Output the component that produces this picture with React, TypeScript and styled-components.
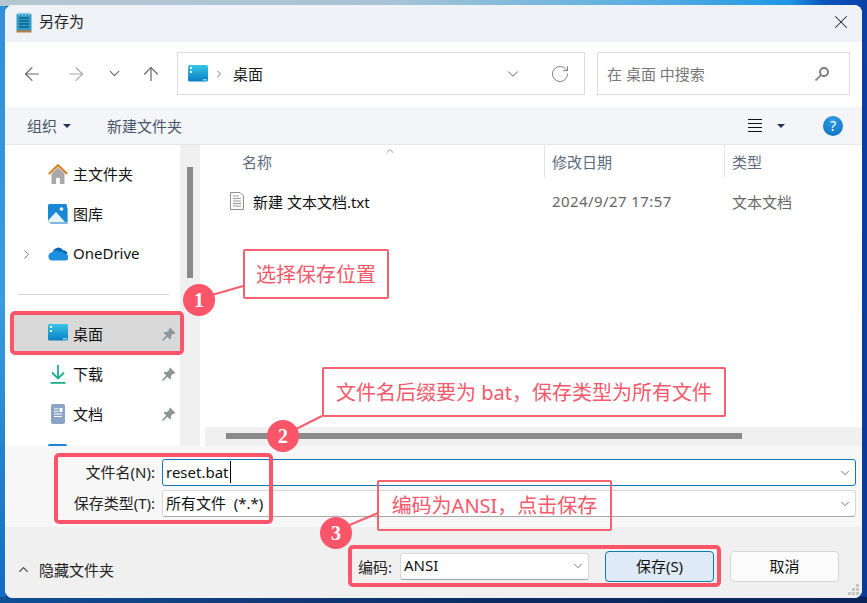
import React from 'react'
import styled, { createGlobalStyle } from 'styled-components'
import { ArrowLeft, ArrowRight, ArrowUp, ChevronDown, ChevronRight, ChevronUp, RotateCw, X } from 'lucide-react'

const FONT = '"Noto Sans", "Noto Sans CJK SC", sans-serif'

const GlobalStyle = createGlobalStyle`
  html, body { margin: 0; padding: 0; }
  body { font-family: ${FONT}; font-size: 15px; color: #1a1a1a; }
  * { box-sizing: border-box; }
`

const Desktop = styled.div`
  position: relative;
  width: 867px;
  height: 603px;
  padding: 5px;
  overflow: hidden;
  background:
    linear-gradient(90deg, #b4c6d0 0%, #a9c4d6 45%, #58aee0 75%, #1f97e6 91%, #0b55bd 95%, #0a3fa6 100%) top / 100% 6px no-repeat,
    linear-gradient(90deg, #0f4f96 0%, #123a78 30%, #0b2a62 60%, #0a2458 100%) bottom / 100% 6px no-repeat,
    linear-gradient(180deg, #2f8fd8 0%, #3a9be0 50%, #0f6cc0 100%) left / 6px 100% no-repeat,
    linear-gradient(180deg, #0a3fa6 0%, #0a3a98 100%);
`

const Window = styled.div`
  width: 857px;
  height: 593px;
  display: flex;
  flex-direction: column;
  border-radius: 8px;
  overflow: hidden;
  background: #fff;
`

const TitleBar = styled.div`
  height: 37px;
  flex: none;
  display: flex;
  align-items: center;
  gap: 7px;
  padding: 0 10px 3px 11px;
  background: #eff3f8;
`

const TitleText = styled.span`
  flex: 1;
  padding-bottom: 3px;
  color: #222;
`

const NavBar = styled.div`
  height: 65px;
  flex: none;
  display: flex;
  align-items: center;
  padding: 0 12px 2px 0;
  background: #fff;
`

const NavButton = styled.span<{ $w: number; $disabled?: boolean }>`
  width: ${(p) => p.$w}px;
  flex: none;
  display: flex;
  justify-content: center;
  color: ${(p) => (p.$disabled ? '#a8a8a8' : '#666')};
`

const AddressBox = styled.div`
  width: 408px;
  height: 43px;
  margin-left: 10px;
  flex: none;
  display: flex;
  align-items: center;
  padding: 0 10px;
  border: 1px solid #dcdcdc;
  background: #fff;
`

const Crumb = styled.span`
  margin-left: 8px;
  flex: 1;
  color: #1a1a1a;
`

const SearchBox = styled.div`
  width: 253px;
  height: 43px;
  margin-left: 12px;
  display: flex;
  align-items: center;
  justify-content: space-between;
  padding: 0 19px 0 9px;
  border: 1px solid #dcdcdc;
  color: #777;
`

const ToolBar = styled.div`
  height: 38px;
  flex: none;
  display: flex;
  align-items: center;
  padding: 0 19px 0 22px;
  background: #f3f5f8;
  border-bottom: 1px solid #e6e6e6;
  color: #47566a;
`

const ToolLabel = styled.span`
  display: flex;
  align-items: center;
  gap: 6px;
  margin-right: 36px;
`

const Caret = styled.i`
  display: block;
  width: 0;
  height: 0;
  border-left: 4px solid transparent;
  border-right: 4px solid transparent;
  border-top: 4px solid #1d3557;
`

const Spacer = styled.span`
  flex: 1;
`

const ViewIcon = styled.span`
  display: flex;
  flex-direction: column;
  gap: 3px;
  width: 14px;
  margin-right: 15px;

  b {
    display: block;
    height: 1px;
    background: #111;
  }
`

const HelpBadge = styled.span`
  width: 20px;
  height: 20px;
  margin-left: 38px;
  border-radius: 50%;
  background: radial-gradient(circle at 50% 20%, #2f9be6, #0b6fbe);
  color: #fff;
  font-size: 14px;
  line-height: 20px;
  text-align: center;
`

const Body = styled.div`
  height: 301px;
  flex: none;
  display: flex;
  background: #fff;
`

const Sidebar = styled.nav`
  width: 175px;
  flex: none;
  padding-top: 9px;
  overflow: hidden;
`

const NavRow = styled.div<{ $selected?: boolean }>`
  height: 40px;
  margin-left: 9px;
  display: flex;
  align-items: center;
  padding: 0 4px 0 8px;
  background: ${(p) => (p.$selected ? '#d9d9d9' : 'transparent')};
  color: #111;
`

const Expander = styled.span`
  width: 26px;
  flex: none;
  color: #777;
  display: flex;
`

const NavIcon = styled.span`
  width: 20px;
  height: 20px;
  flex: none;
  margin-right: 5px;
`

const NavLabel = styled.span`
  flex: 1;
  padding-bottom: 2px;
`

const NavDivider = styled.div`
  height: 40px;
  margin: 0 11px 0 13px;
  display: flex;
  align-items: center;

  &::after {
    content: '';
    flex: 1;
    height: 1px;
    background: #d4d4d4;
  }
`

const VScroll = styled.div`
  width: 20px;
  flex: none;
  padding-top: 22px;
  background: #f0f0f0;

  i {
    display: block;
    width: 6px;
    height: 111px;
    margin-left: 7px;
    background: #8a8a8a;
  }
`

const FilePane = styled.section`
  flex: 1;
  margin-left: 5px;
  display: flex;
  flex-direction: column;
  min-width: 0;
`

const Rows = styled.div`
  flex: 1;
`

const ColumnHeader = styled.div`
  position: relative;
  height: 33px;
  display: grid;
  grid-template-columns: 339px 180px 1fr;
  color: #5c6b7e;
`

const SortMark = styled.span`
  position: absolute;
  left: 179px;
  top: 0;
  color: #666;
  display: flex;
`

const HeadCell = styled.div<{ $indent: number; $rule?: boolean }>`
  display: flex;
  align-items: center;
  padding-left: ${(p) => p.$indent}px;
  border-left: ${(p) => (p.$rule ? '1px solid #e4e4e4' : 'none')};
`

const FileRow = styled.div`
  height: 40px;
  margin-top: 3px;
  display: grid;
  grid-template-columns: 339px 180px 1fr;
  align-items: center;
`

const FileName = styled.div`
  display: flex;
  align-items: center;
  gap: 9px;
  padding-left: 25px;
  color: #111;
`

const FileMeta = styled.div`
  padding-left: 8px;
  color: #666;
`

const FileDate = styled(FileMeta)`
  letter-spacing: 0.42px;
`

const HScroll = styled.div`
  height: 19px;
  flex: none;
  padding: 6px 0 0 21px;
  background: #f0f0f0;

  i {
    display: block;
    width: 516px;
    height: 6px;
    background: #8a8a8a;
  }
`

const FormArea = styled.div`
  height: 81px;
  flex: none;
  display: flex;
  flex-direction: column;
  gap: 4px;
  padding: 13px 6px 0 0;
  background: #f7f7f7;
`

const FormRow = styled.div`
  display: flex;
  align-items: center;
  height: 27px;
`

const FormLabel = styled.label`
  width: 152px;
  flex: none;
  padding: 0 2px 2px 0;
  text-align: right;
  color: #222;
  white-space: nowrap;
`

const Field = styled.div<{ $focus?: boolean; $w?: number }>`
  width: ${(p) => (p.$w ? `${p.$w}px` : 'auto')};
  flex: ${(p) => (p.$w ? 'none' : '1')};
  height: 27px;
  margin-left: ${(p) => (p.$w ? '0' : '5px')};
  display: flex;
  align-items: center;
  justify-content: space-between;
  padding: 0 3px 0 3px;
  background: #fff;
  border: 1px solid ${(p) => (p.$focus ? '#0f78b8' : '#d8d8d8')};
  border-bottom-color: ${(p) => (p.$focus ? '#0f78b8' : '#a8a8a8')};
  border-radius: 3px;
  color: #111;
  white-space: pre;
`

const TextCaret = styled.i`
  display: inline-block;
  width: 1px;
  height: 22px;
  margin-left: 1px;
  background: #000;
  vertical-align: middle;
`

const FieldText = styled.span`
  display: flex;
  align-items: center;
  padding-bottom: 2px;
`

const ActionBar = styled.div`
  flex: 1;
  position: relative;
  display: flex;
  align-items: center;
  padding: 0 23px 0 11px;
  background: #f0f0f0;
`

const Toggle = styled.span`
  display: flex;
  align-items: center;
  gap: 8px;
  flex: 1;
  margin-top: 14px;
  color: #222;
`

const EncodingLabel = styled.span`
  margin-right: 8px;
  color: #222;
`

const EncodingGroup = styled.div`
  display: flex;
  align-items: center;
  margin-top: 7px;
`

const DialogButton = styled.button<{ $primary?: boolean }>`
  width: 109px;
  height: 31px;
  margin-left: 16px;
  padding: 0 0 2px;
  font: inherit;
  color: #111;
  border-radius: 4px;
  border: 1px solid ${(p) => (p.$primary ? '#0f78b8' : '#d6d6d6')};
  background: ${(p) => (p.$primary ? '#deebf6' : '#fbfbfb')};
`

const Grip = styled.svg`
  position: absolute;
  right: 2px;
  bottom: 2px;
`

const Highlight = styled.div<{ $x: number; $y: number; $w: number; $h: number }>`
  position: absolute;
  left: ${(p) => p.$x}px;
  top: ${(p) => p.$y}px;
  width: ${(p) => p.$w}px;
  height: ${(p) => p.$h}px;
  border: 4px solid #fb5569;
  border-radius: 5px;
`

const Callout = styled.div<{ $x: number; $y: number; $w: number; $h: number }>`
  position: absolute;
  left: ${(p) => p.$x}px;
  top: ${(p) => p.$y}px;
  width: ${(p) => p.$w}px;
  height: ${(p) => p.$h}px;
  display: flex;
  align-items: center;
  justify-content: center;
  padding-bottom: 2px;
  border: 2px solid #f7606f;
  border-radius: 2px;
  color: #f5596b;
  font-size: 20px;
  white-space: pre;
`

const Marker = styled.div<{ $x: number; $y: number }>`
  position: absolute;
  left: ${(p) => p.$x - 16}px;
  top: ${(p) => p.$y - 16}px;
  width: 32px;
  height: 32px;
  border-radius: 50%;
  background: #fb5569;
  color: #fff;
  font: bold 20px/32px "Liberation Serif", serif;
  text-align: center;
`

const Connectors = styled.svg`
  position: absolute;
  left: 0;
  top: 0;
`

const DesktopIcon = ({ w = 20, h = 17 }: { w?: number; h?: number }) => (
  <svg width={w} height={h} viewBox="0 0 20 17">
    <defs>
      <linearGradient id="desk" x1="0" y1="0" x2="0" y2="1">
        <stop offset="0" stopColor="#38c6e6" />
        <stop offset="1" stopColor="#0a7fc4" />
      </linearGradient>
    </defs>
    <rect x="0" y="0" width="20" height="16.5" rx="1.5" fill="url(#desk)" />
    <rect x="2" y="2" width="2" height="2" fill="#fff" />
    <rect x="2" y="6" width="2" height="2" fill="#fff" />
    <rect x="15" y="14.4" width="4" height="1" fill="#d8f0fa" />
  </svg>
)

const NotepadIcon = () => (
  <svg width="16" height="21" viewBox="0 0 16 21">
    <rect x="0.5" y="1.5" width="15" height="18" rx="1.5" fill="#2f9fc6" />
    <rect x="0.5" y="18.5" width="15" height="2" fill="#c9793a" />
    <path d="M3 6h10M3 9h10M3 12h10M3 15h10" stroke="#0f5f86" strokeWidth="1.3" />
    <path d="M3 0.5v3M6.3 0.5v3M9.7 0.5v3M13 0.5v3" stroke="#9fd4e6" strokeWidth="1.2" />
  </svg>
)

const HomeIcon = () => (
  <svg width="20" height="20" viewBox="0 0 20 20">
    <path d="M3.5 9.5L10 3.5l6.5 6V20h-4.6v-6H8.1v6H3.5z" fill="#a9a9a9" />
    <path d="M0.8 10L10 1.2 19.2 10" fill="none" stroke="#d98324" strokeWidth="2.2" />
  </svg>
)

const GalleryIcon = () => (
  <svg width="20" height="20" viewBox="0 0 20 20">
    <rect x="2" y="3" width="18" height="17" rx="1.5" fill="#7db6de" />
    <rect x="0" y="0" width="19" height="18" rx="1.5" fill="#1a86d6" />
    <circle cx="13.5" cy="5" r="1.8" fill="#fff" />
    <path d="M0 16.5L8 8l9 10H1.5A1.5 1.5 0 0 1 0 16.5z" fill="#e8f2fa" />
  </svg>
)

const CloudIcon = () => (
  <svg width="20" height="20" viewBox="0 0 20 20">
    <path d="M5 7.5a5.5 5.5 0 0 1 10-1.2A4 4 0 0 1 19.5 10L12 13 6 9z" fill="#0a64b4" />
    <path d="M4.2 16.5A4 4 0 0 1 3.6 8.6 5 5 0 0 1 11 7.8a4.4 4.4 0 0 1 6 2.4 3.2 3.2 0 0 1 1 6.3z" fill="#1c8fe0" />
  </svg>
)

const DownloadIcon = () => (
  <svg width="20" height="20" viewBox="0 0 20 20">
    <path d="M10 1v13M4 8.5l6 6 6-6" fill="none" stroke="#1fae8f" strokeWidth="1.8" />
    <rect x="2.5" y="18" width="15" height="1.8" fill="#1fae8f" />
  </svg>
)

const DocsIcon = () => (
  <svg width="20" height="20" viewBox="0 0 20 20">
    <rect x="3" y="0" width="14" height="20" rx="2" fill="#8ba3c4" />
    <path d="M6 5h4.5M6 7.5h4.5M6 10h8M6 12.5h8" stroke="#fff" strokeWidth="1.1" />
    <rect x="11.5" y="4" width="3" height="4" fill="#fff" />
  </svg>
)

const PinIcon = () => (
  <svg width="14" height="14" viewBox="0 0 14 14">
    <path d="M8 0.5l5.5 5.5-1.2 1-1-.4-2.4 2.4.2 2.4-1 1-2.6-2.6L1 14 0 13l4.2-4.5L1.6 5.9l1-1 2.4.2 2.4-2.4-.4-1z" fill="#8f9498" />
  </svg>
)

const SearchGlyph = () => (
  <svg width="16" height="16" viewBox="0 0 16 16">
    <circle cx="10" cy="6" r="4" fill="none" stroke="#777" strokeWidth="1.8" />
    <path d="M7 9l-5.5 5.5" stroke="#929292" strokeWidth="2.2" />
  </svg>
)

const TextFileIcon = () => (
  <svg width="14" height="18" viewBox="0 0 14 18">
    <path d="M.5.5h9.5l3.5 3.5v13.5H.5z" fill="#fff" stroke="#8f8f8f" />
    <path d="M3 4h6M3 6.5h8M3 9h8M3 11.5h8M3 14h8" stroke="#9a9a9a" />
  </svg>
)

const sideItems = [
  { label: '主文件夹', icon: <HomeIcon /> },
  { label: '图库', icon: <GalleryIcon /> },
  { label: 'OneDrive', icon: <CloudIcon />, expand: true },
  { divider: true },
  { label: '桌面', icon: <DesktopIcon />, pin: true, selected: true },
  { label: '下载', icon: <DownloadIcon />, pin: true },
  { label: '文档', icon: <DocsIcon />, pin: true },
  { label: '', icon: <GalleryIcon /> },
]

export default function App() {
  return (
    <Desktop>
      <GlobalStyle />
      <Window>
        <TitleBar>
          <NotepadIcon />
          <TitleText>另存为</TitleText>
          <X size={22} strokeWidth={1.1} color="#222" />
        </TitleBar>

        <NavBar>
          <NavButton $w={54}>
            <ArrowLeft size={22} strokeWidth={1.3} />
          </NavButton>
          <NavButton $w={34} $disabled>
            <ArrowRight size={22} strokeWidth={1.3} />
          </NavButton>
          <NavButton $w={42}>
            <ChevronDown size={17} strokeWidth={1.6} />
          </NavButton>
          <NavButton $w={32}>
            <ArrowUp size={22} strokeWidth={1.3} />
          </NavButton>
          <AddressBox>
            <DesktopIcon />
            <ChevronRight size={12} strokeWidth={1.8} color="#666" style={{ marginLeft: 5 }} />
            <Crumb>桌面</Crumb>
            <ChevronDown size={18} strokeWidth={1.2} color="#555" style={{ marginRight: 28 }} />
            <RotateCw size={20} strokeWidth={1.1} color="#777" style={{ marginRight: 4 }} />
          </AddressBox>
          <SearchBox>
            <span>在 桌面 中搜索</span>
            <SearchGlyph />
          </SearchBox>
        </NavBar>

        <ToolBar>
          <ToolLabel>
            组织
            <Caret />
          </ToolLabel>
          <span>新建文件夹</span>
          <Spacer />
          <ViewIcon>
            <b />
            <b />
            <b />
            <b />
          </ViewIcon>
          <Caret />
          <HelpBadge>?</HelpBadge>
        </ToolBar>

        <Body>
          <Sidebar>
            {sideItems.map((item, i) =>
              item.divider ? (
                <NavDivider key={i} />
              ) : (
                <NavRow key={i} $selected={item.selected}>
                  <Expander>{item.expand && <ChevronRight size={15} strokeWidth={1.6} style={{ marginLeft: -3 }} />}</Expander>
                  <NavIcon>{item.icon}</NavIcon>
                  <NavLabel>{item.label}</NavLabel>
                  {item.pin && <PinIcon />}
                </NavRow>
              )
            )}
          </Sidebar>
          <VScroll>
            <i />
          </VScroll>
          <FilePane>
            <Rows>
              <ColumnHeader>
                <SortMark>
                  <ChevronUp size={12} strokeWidth={1.4} />
                </SortMark>
                <HeadCell $indent={37}>名称</HeadCell>
                <HeadCell $indent={7} $rule>
                  修改日期
                </HeadCell>
                <HeadCell $indent={7} $rule>
                  类型
                </HeadCell>
              </ColumnHeader>
              <FileRow>
                <FileName>
                  <TextFileIcon />
                  新建 文本文档.txt
                </FileName>
                <FileDate>2024/9/27 17:57</FileDate>
                <FileMeta>文本文档</FileMeta>
              </FileRow>
            </Rows>
            <HScroll>
              <i />
            </HScroll>
          </FilePane>
        </Body>

        <FormArea>
          <FormRow>
            <FormLabel>文件名(N):</FormLabel>
            <Field $focus>
              <FieldText>
                reset.bat
                <TextCaret />
              </FieldText>
              <ChevronDown size={14} strokeWidth={1.2} color="#444" />
            </Field>
          </FormRow>
          <FormRow>
            <FormLabel>保存类型(T):</FormLabel>
            <Field>
              <FieldText>所有文件  (*.*)</FieldText>
              <ChevronDown size={14} strokeWidth={1.2} color="#444" />
            </Field>
          </FormRow>
        </FormArea>

        <ActionBar>
          <Toggle>
            <ChevronUp size={15} strokeWidth={2} color="#444" />
            隐藏文件夹
          </Toggle>
          <EncodingGroup>
            <EncodingLabel>编码:</EncodingLabel>
            <Field $w={189}>
              <FieldText>ANSI</FieldText>
              <ChevronDown size={14} strokeWidth={1.2} color="#444" />
            </Field>
            <DialogButton $primary>保存(S)</DialogButton>
            <DialogButton>取消</DialogButton>
          </EncodingGroup>
          <Grip width="12" height="12" viewBox="0 0 12 12" fill="#c4c4c4">
            <rect x="8" y="0" width="3" height="3" />
            <rect x="4" y="4" width="3" height="3" />
            <rect x="8" y="4" width="3" height="3" />
            <rect x="0" y="8" width="3" height="3" />
            <rect x="4" y="8" width="3" height="3" />
            <rect x="8" y="8" width="3" height="3" />
          </Grip>
        </ActionBar>
      </Window>

      <Connectors width="867" height="603" viewBox="0 0 867 603">
        <path d="M212 295L243 286M296 429L322 416M345 527L378 513" stroke="#f7606f" strokeWidth="2" fill="none" />
      </Connectors>
      <Highlight $x={10} $y={311} $w={174} $h={44} />
      <Highlight $x={54} $y={453} $w={219} $h={71} />
      <Highlight $x={348} $y={545} $w={373} $h={42} />
      <Callout $x={243} $y={249} $w={146} $h={50}>
        选择保存位置
      </Callout>
      <Callout $x={322} $y={367} $w={404} $h={50}>
        文件名后缀要为 bat，保存类型为所有文件
      </Callout>
      <Callout $x={377} $y={480} $w={235} $h={51}>
        编码为ANSI，点击保存
      </Callout>
      <Marker $x={199} $y={300}>1</Marker>
      <Marker $x={283} $y={436}>2</Marker>
      <Marker $x={336} $y={533}>3</Marker>
    </Desktop>
  )
}
